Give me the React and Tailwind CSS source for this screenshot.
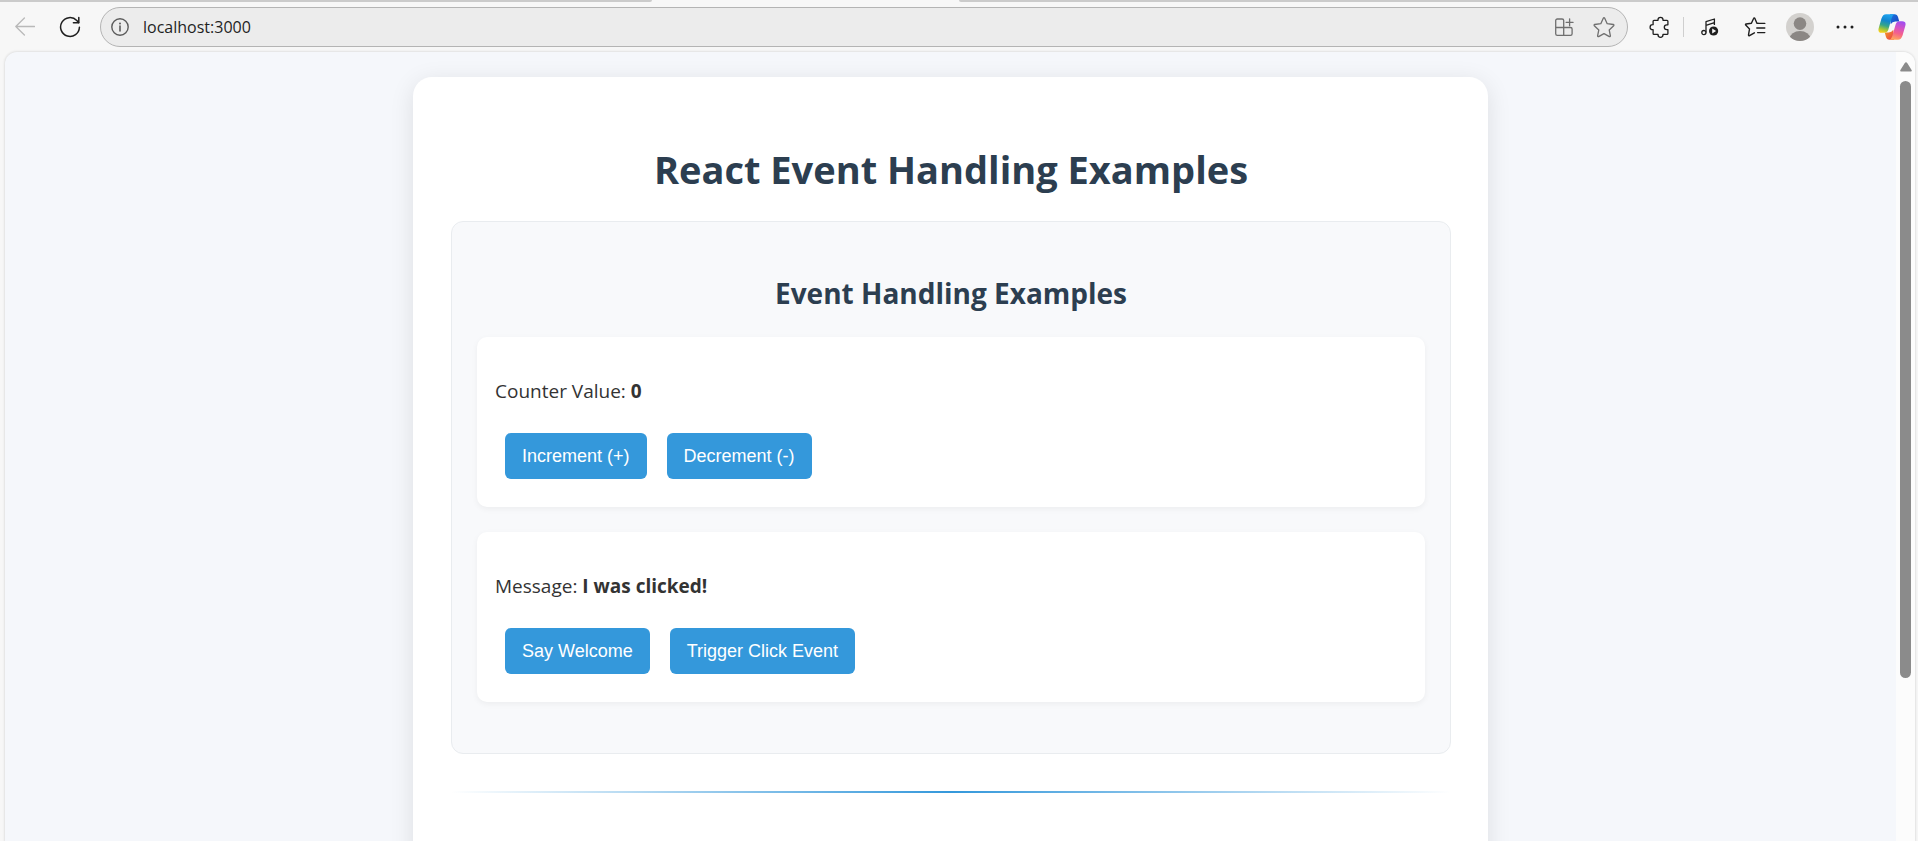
import React, { useState } from "react";

function ToolButton({ label, className = "w-[45px]", children }) {
  return (
    <button type="button" aria-label={label} className={`flex h-10 shrink-0 items-center justify-center text-[#1f1f1f] ${className}`}>
      {children}
    </button>
  );
}

function BackIcon() {
  return (
    <svg width="20" height="20" viewBox="0 0 20 20" fill="none" stroke="#b9b9b9" strokeWidth="1.3" strokeLinecap="round" strokeLinejoin="round">
      <path d="M19.5 9.5H.8M9.4 1 .8 9.5 9.4 18" />
    </svg>
  );
}

function ReloadIcon() {
  return (
    <svg width="22" height="22" viewBox="0 0 22 22" fill="none" stroke="#1f1f1f" strokeWidth="1.5" strokeLinecap="round" strokeLinejoin="round">
      <path d="M20.4 11.2A9.4 9.4 0 1 1 17.8 4.5L19.6 6.6" />
      <path d="M19.8 1.4V6.8H14.4" />
    </svg>
  );
}

function InfoIcon() {
  return (
    <svg width="18" height="18" viewBox="0 0 18 18" fill="none" stroke="#5c5c5c" strokeWidth="1.4">
      <circle cx="9" cy="9" r="8.2" />
      <path d="M9 8v5" strokeWidth="1.6" strokeLinecap="round" />
      <circle cx="9" cy="5.5" r="1" fill="#5c5c5c" stroke="none" />
    </svg>
  );
}

function AppAddIcon() {
  return (
    <svg width="20" height="20" viewBox="0 0 20 20" fill="none" stroke="#6f6f6f" strokeWidth="1.3" strokeLinecap="round" strokeLinejoin="round">
      <path d="M9.7 10.5V3.6A1.6 1.6 0 0 0 8.1 2H3.3a1.6 1.6 0 0 0-1.6 1.6v13.2a1.6 1.6 0 0 0 1.6 1.6h13.2a1.6 1.6 0 0 0 1.6-1.6v-4.7a1.6 1.6 0 0 0-1.6-1.6H1.7M9.7 10.5v7.9" />
      <path d="M15.6 1.8v7M12.1 5.3h7" />
    </svg>
  );
}

function StarIcon() {
  return (
    <svg width="22" height="22" viewBox="0 0 22 22" fill="none" stroke="#6f6f6f" strokeWidth="1.3" strokeLinejoin="round">
      <path d="M10.4 2.1a.7.7 0 0 1 1.2 0l2.6 5.6 6.1.8c.6.1.8.8.4 1.2l-4.5 4.2 1.2 6c.1.6-.5 1-1 .7L11 17.6l-5.4 3c-.5.3-1.1-.1-1-.7l1.2-6L1.3 9.7c-.4-.4-.2-1.1.4-1.2l6.1-.8z" />
    </svg>
  );
}

function PuzzleIcon() {
  return (
    <svg width="22" height="22" viewBox="0 0 22 22" fill="none" stroke="#1f1f1f" strokeWidth="1.3" strokeLinejoin="round">
      <path d="M9 4.3V3.8a2.5 2.5 0 0 1 5 0v.5h4a.9.9 0 0 1 .9.9v3.6h-1.2a2.3 2.3 0 0 0 0 4.8h1.2v3.8a.9.9 0 0 1-.9.9h-4v.5a2.5 2.5 0 0 1-5 0v-.5H5a.9.9 0 0 1-.9-.9v-3.7h-.5a2.5 2.5 0 0 1 0-5h.5V5.2a.9.9 0 0 1 .9-.9z" />
    </svg>
  );
}

function MusicIcon() {
  return (
    <svg width="18" height="18" viewBox="0 0 18 18" fill="none" stroke="#1f1f1f" strokeWidth="1.3" strokeLinejoin="round">
      <circle cx="2.9" cy="14.6" r="2.1" />
      <path d="M5 14.6V3.7L13.4 1v6M5 7.3l8.4-2.7" />
      <circle cx="12.6" cy="13" r="4.6" fill="#1f1f1f" stroke="none" />
      <path d="M11.2 10.6v4.800l3.900-2.400z" fill="#f7f7f7" stroke="none" />
    </svg>
  );
}

function FavoritesIcon() {
  return (
    <svg width="22" height="22" viewBox="0 0 22 22" fill="none" stroke="#1f1f1f" strokeWidth="1.4" strokeLinecap="round" strokeLinejoin="round">
      <path d="M14.2 7.4 12.9 7.3 10.9 2.5a.7.7 0 0 0-1.3 0L7.4 7.3l-5.3.7c-.6.1-.8.7-.4 1.1l3.8 3.9-1 5.9c-.1.6.5 1 1 .7l4.9-2.8" />
      <path d="M13.6 7.4h7.2M12.8 12h8M13.6 16.6h7.2" />
    </svg>
  );
}

function AvatarIcon() {
  return (
    <svg width="28" height="28" viewBox="0 0 28 28">
      <defs>
        <clipPath id="avatar-clip">
          <circle cx="14" cy="14" r="14" />
        </clipPath>
      </defs>
      <g clipPath="url(#avatar-clip)">
        <rect width="28" height="28" fill="#d3d1ce" />
        <circle cx="14" cy="10.6" r="6.3" fill="#8b8784" />
        <ellipse cx="14" cy="25.4" rx="10.2" ry="7.3" fill="#8b8784" />
      </g>
    </svg>
  );
}

function DotsIcon() {
  return (
    <svg width="18" height="18" viewBox="0 0 18 18" fill="#1f1f1f">
      <circle cx="2" cy="9" r="1.5" />
      <circle cx="9" cy="9" r="1.5" />
      <circle cx="16" cy="9" r="1.5" />
    </svg>
  );
}

function CopilotIcon() {
  return (
    <svg width="28" height="26" viewBox="0 0 84 79">
      <defs>
        <linearGradient id="cp-left" x1="0.6" y1="0" x2="0.35" y2="1">
          <stop offset="0" stopColor="#1fa4f0" />
          <stop offset="0.35" stopColor="#1286d0" />
          <stop offset="0.62" stopColor="#35a58a" />
          <stop offset="0.82" stopColor="#9cc43c" />
          <stop offset="1" stopColor="#f5cf1b" />
        </linearGradient>
        <linearGradient id="cp-right" x1="0.65" y1="0" x2="0.4" y2="1">
          <stop offset="0" stopColor="#a04df0" />
          <stop offset="0.35" stopColor="#d452c4" />
          <stop offset="0.65" stopColor="#f4608c" />
          <stop offset="1" stopColor="#ffa45c" />
        </linearGradient>
        <linearGradient id="cp-top" x1="0" y1="0" x2="1" y2="1">
          <stop offset="0" stopColor="#1a78e0" />
          <stop offset="1" stopColor="#1b3fbd" />
        </linearGradient>
        <linearGradient id="cp-bottom" x1="0" y1="0" x2="1" y2="1">
          <stop offset="0" stopColor="#f6a21e" />
          <stop offset="1" stopColor="#e8384f" />
        </linearGradient>
      </defs>
      <path d="M36 1H50Q58 1 60.500 10L64 23H52Q43 23 38 31Z" fill="url(#cp-top)" />
      <path d="M48 78H34Q26 78 23.500 69L20 56H32Q41 56 46 48Z" fill="url(#cp-bottom)" />
      <path d="M24 1H50Q44 2 41 12L31 47Q28 57 18 57H11Q-2 57 1.500 43L10 14Q14 1 24 1Z" fill="url(#cp-left)" />
      <path d="M60 78H34Q40 77 43 67L53 32Q56 22 66 22H73Q86 22 82.500 36L74 65Q70 78 60 78Z" fill="url(#cp-right)" />
    </svg>
  );
}

function BrowserBar() {
  return (
    <header className="shrink-0 bg-[#f7f7f7]">
      <div className="flex h-[2px] justify-between">
        <div className="w-[34%] rounded-br-lg bg-[#cbcbcb]" />
        <div className="w-[50%] rounded-bl-lg bg-[#cbcbcb]" />
      </div>
      <div className="flex h-[50px] items-center pr-px pl-[5px]">
        <ToolButton label="Back" className="w-10">
          <BackIcon />
        </ToolButton>
        <ToolButton label="Reload" className="ml-[5px] w-10">
          <ReloadIcon />
        </ToolButton>
        <div className="ml-[10px] flex h-10 min-w-0 flex-1 items-center rounded-full border border-[#b4b4b4] bg-[#ececec] pr-[3px] pl-[10px]">
          <InfoIcon />
          <input
            type="text"
            aria-label="Address"
            defaultValue="localhost:3000"
            className="ml-[14px] min-w-0 flex-1 bg-transparent text-base text-[#1f1f1f] outline-none"
          />
          <button type="button" aria-label="Install app" className="flex w-10 justify-center">
            <AppAddIcon />
          </button>
          <button type="button" aria-label="Add to favorites" className="flex w-10 justify-center">
            <StarIcon />
          </button>
        </div>
        <ToolButton label="Extensions" className="ml-[9px] w-[45px]">
          <PuzzleIcon />
        </ToolButton>
        <div className="mr-[3px] ml-px h-5 w-px shrink-0 bg-[#cfcfcf]" />
        <ToolButton label="Media controls">
          <MusicIcon />
        </ToolButton>
        <ToolButton label="Favorites">
          <FavoritesIcon />
        </ToolButton>
        <ToolButton label="Profile">
          <AvatarIcon />
        </ToolButton>
        <ToolButton label="Settings and more">
          <DotsIcon />
        </ToolButton>
        <ToolButton label="Copilot" className="w-[50px]">
          <CopilotIcon />
        </ToolButton>
      </div>
    </header>
  );
}

function ActionButton({ onClick, children }) {
  return (
    <button
      type="button"
      onClick={onClick}
      className="h-[46px] rounded-md bg-[#3498db] px-[17px] font-['Liberation_Sans',Arial,sans-serif] text-lg text-white"
    >
      {children}
    </button>
  );
}

function ExampleCard({ label, value, children }) {
  return (
    <section className="mt-[25px] rounded-[10px] bg-white px-[18px] pt-[39px] pb-7 shadow-[0_2px_6px_rgba(0,0,0,0.05)]">
      <p className="text-[19px] leading-[30px] text-[#333333]">
        {label} <strong className="font-bold">{value}</strong>
      </p>
      <div className="mt-[27px] flex flex-wrap gap-5 px-[10px]">{children}</div>
    </section>
  );
}

function Scrollbar() {
  return (
    <div aria-hidden="true" className="flex w-[19px] shrink-0 flex-col items-center bg-[#fcfcfc] pt-[10px]">
      <svg width="12" height="10" viewBox="0 0 12 10" fill="#8b8b8b">
        <path d="M4.800.9a1.400 1.400 0 0 1 2.400 0l4.400 7a1.100 1.100 0 0 1-.9 1.700H1.300a1.100 1.100 0 0 1-.9-1.700z" />
      </svg>
      <div className="mt-[9px] w-[11px] flex-[11] rounded-full bg-[#8b8b8b]" />
      <div className="flex-[3]" />
    </div>
  );
}

export default function App() {
  const [count, setCount] = useState(0);
  const [message, setMessage] = useState("I was clicked!");

  return (
    <div className="flex h-screen flex-col overflow-hidden bg-[#f7f7f7] font-['Open_Sans','Noto_Sans',sans-serif]">
      <BrowserBar />
      <div className="mr-[3px] ml-[5px] flex min-h-0 flex-1 overflow-hidden rounded-t-xl bg-[#f5f7fb] shadow-[0_0_2px_1px_#e2e2e2]">
        <main className="min-w-0 flex-1 overflow-hidden px-5 pt-[25px]">
          <div className="mx-auto max-w-[1075px] rounded-[19px] bg-white pt-[67px] pr-[37px] pb-24 pl-[38px] shadow-[0_5px_25px_rgba(0,0,0,0.1)]">
            <h1 className="text-center text-[38px] leading-[50px] font-bold text-[#2c3e50]">React Event Handling Examples</h1>
            <div className="mt-[27px] rounded-xl border border-[#e9ecef] bg-[#f8f9fb] px-[25px] pt-[51px] pb-[51px]">
              <h2 className="-mb-px text-center text-[28px] leading-10 font-bold text-[#2c3e50]">Event Handling Examples</h2>
              <ExampleCard label="Counter Value:" value={count}>
                <ActionButton onClick={() => setCount(count + 1)}>Increment (+)</ActionButton>
                <ActionButton onClick={() => setCount(count - 1)}>Decrement (-)</ActionButton>
              </ExampleCard>
              <ExampleCard label="Message:" value={message}>
                <ActionButton onClick={() => setMessage("Welcome!")}>Say Welcome</ActionButton>
                <ActionButton onClick={() => setMessage("I was clicked!")}>Trigger Click Event</ActionButton>
              </ExampleCard>
            </div>
            <hr className="mt-[37px] h-[2px] border-0 bg-linear-to-r/srgb from-[#3498db]/0 via-[#3498db] to-[#3498db]/0" />
          </div>
        </main>
        <Scrollbar />
      </div>
    </div>
  );
}
